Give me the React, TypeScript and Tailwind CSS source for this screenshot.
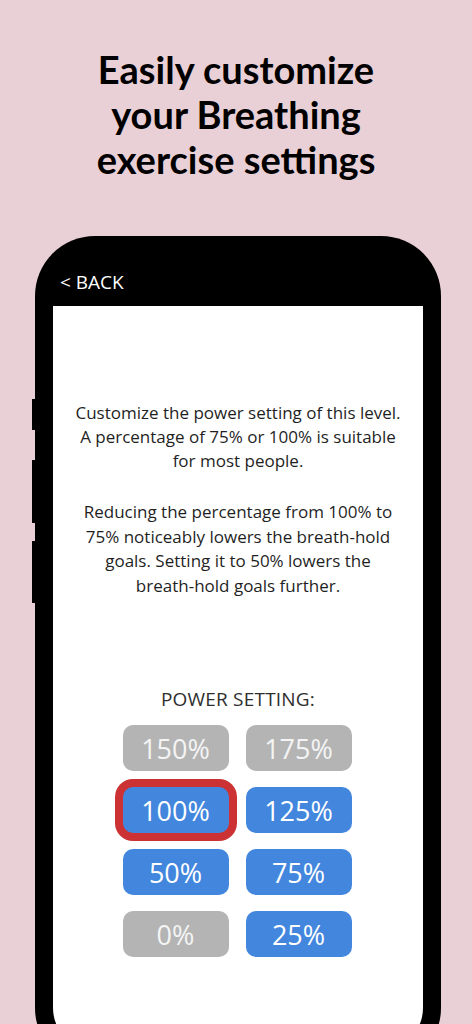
import React from "react";

type Level = { label: string; enabled: boolean; selected?: boolean };

const levels: Level[] = [
  { label: "150%", enabled: false },
  { label: "175%", enabled: false },
  { label: "100%", enabled: true, selected: true },
  { label: "125%", enabled: true },
  { label: "50%", enabled: true },
  { label: "75%", enabled: true },
  { label: "0%", enabled: false },
  { label: "25%", enabled: true },
];

function LevelButton({ level }: { level: Level }) {
  return (
    <button
      type="button"
      className={`h-[46px] w-[106px] rounded-[10px] text-[27px] leading-none ${
        level.enabled ? "bg-[#4286dd] text-white" : "bg-[#b4b4b4] text-[#f4f4f4]"
      } ${level.selected ? "ring-8 ring-[#cc3233]" : ""}`}
    >
      {level.label}
    </button>
  );
}

export default function App() {
  return (
    <div className="h-[1024px] w-[472px] overflow-hidden bg-[#e9cfd6]">
      <h1
        className="pt-[47px] text-center text-[38px] leading-[45px] font-bold text-black"
        style={{ fontFamily: "Lato, 'Noto Sans', sans-serif" }}
      >
        Easily customize
        <br />
        your Breathing
        <br />
        exercise settings
      </h1>

      {/* phone frame */}
      <div className="relative mt-[54px] ml-[35px] h-[832px] w-[406px] rounded-[60px] bg-black px-[18px] pb-[18px]">
        <span className="absolute -left-[3px] top-[163px] h-[31px] w-[3px] bg-black" />
        <span className="absolute -left-[3px] top-[224px] h-[63px] w-[3px] bg-black" />
        <span className="absolute -left-[3px] top-[305px] h-[62px] w-[3px] bg-black" />

        <div
          className="flex h-[70px] items-center pl-[7px] pt-[22px] text-[19px] text-white"
          style={{ fontFamily: "'Open Sans', sans-serif" }}
        >
          &lt; BACK
        </div>

        <div
          className="flex h-[744px] flex-col items-center rounded-b-[42px] bg-white pt-[95px] text-center text-[#1f1f1f]"
          style={{ fontFamily: "'Open Sans', sans-serif" }}
        >
          <p className="text-[17px] leading-[24px]">
            Customize the power setting of this level.
            <br />
            A percentage of 75% or 100% is suitable
            <br />
            for most people.
          </p>
          <p className="mt-[27px] text-[17px] leading-[24.5px]">
            Reducing the percentage from 100% to
            <br />
            75% noticeably lowers the breath-hold
            <br />
            goals. Setting it to 50% lowers the
            <br />
            breath-hold goals further.
          </p>

          <div className="mt-[89px] text-[19px] leading-[24px] tracking-[0.2px] text-[#2e2e2e]">
            POWER SETTING:
          </div>

          <div className="mt-[14px] grid grid-cols-2 gap-x-[17px] gap-y-[16px] pr-[2px]">
            {levels.map((level) => (
              <LevelButton key={level.label} level={level} />
            ))}
          </div>
        </div>
      </div>
    </div>
  );
}
